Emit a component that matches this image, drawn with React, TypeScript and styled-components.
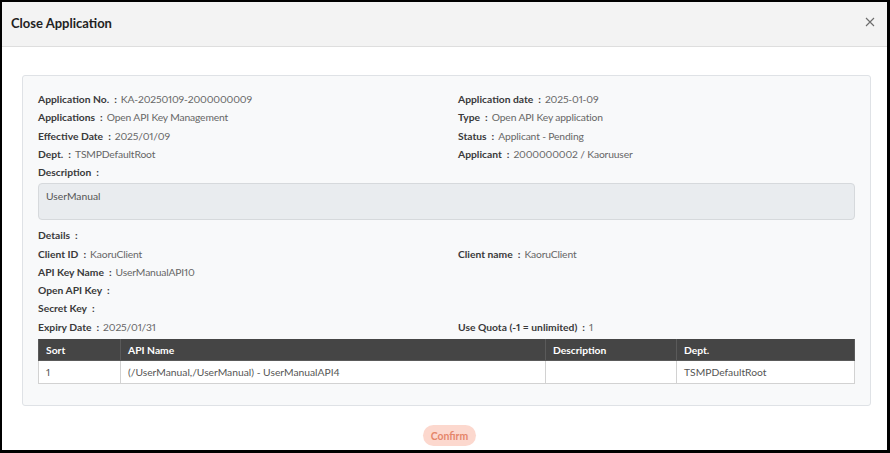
import styled, { createGlobalStyle } from "styled-components";

const GlobalStyle = createGlobalStyle`
  html, body {
    margin: 0;
    padding: 0;
    background: #000;
  }
  * {
    box-sizing: border-box;
  }
`;

const leftFields = [
  { label: "Application No.", value: "KA-20250109-2000000009" },
  { label: "Applications", value: "Open API Key Management" },
  { label: "Effective Date", value: "2025/01/09" },
  { label: "Dept.", value: "TSMPDefaultRoot" },
];

const rightFields = [
  { label: "Application date", value: "2025-01-09" },
  { label: "Type", value: "Open API Key application" },
  { label: "Status", value: "Applicant - Pending" },
  { label: "Applicant", value: "2000000002 / Kaoruuser" },
];

const detailRows = [
  [
    { label: "Client ID", value: "KaoruClient" },
    { label: "Client name", value: "KaoruClient" },
  ],
  [{ label: "API Key Name", value: "UserManualAPI10" }],
  [{ label: "Open API Key", value: "" }],
  [{ label: "Secret Key", value: "" }],
  [
    { label: "Expiry Date", value: "2025/01/31" },
    { label: "Use Quota (-1 = unlimited)", value: "1" },
  ],
];

const apis = [
  {
    sort: "1",
    name: "(/UserManual,/UserManual) - UserManualAPI4",
    description: "",
    dept: "TSMPDefaultRoot",
  },
];

function Field({ label, value }: { label: string; value: string }) {
  return (
    <Line>
      <Label>{label}</Label>
      <Colon>:</Colon>
      <Value>{value}</Value>
    </Line>
  );
}

export default function App() {
  return (
    <>
      <GlobalStyle />
      <Modal>
        <Header>
          <Title>Close Application</Title>
          <CloseButton aria-label="close">
            <svg width="10" height="10" viewBox="0 0 10 10">
              <path d="M1 1 L9 9 M9 1 L1 9" stroke="#6c6c6c" strokeWidth="1.1" />
            </svg>
          </CloseButton>
        </Header>

        <Body>
          <Card>
            <TwoCols>
              <div>
                {leftFields.map((f) => (
                  <Field key={f.label} {...f} />
                ))}
              </div>
              <div>
                {rightFields.map((f) => (
                  <Field key={f.label} {...f} />
                ))}
              </div>
            </TwoCols>

            <Line>
              <Label>Description</Label>
              <Colon>:</Colon>
            </Line>
            <DescriptionBox>UserManual</DescriptionBox>

            <Line $gap={6}>
              <Label>Details</Label>
              <Colon>:</Colon>
            </Line>
            {detailRows.map((row) => (
              <TwoCols key={row[0].label}>
                {row.map((f) => (
                  <Field key={f.label} {...f} />
                ))}
              </TwoCols>
            ))}

            <Table>
              <colgroup>
                <col style={{ width: 82 }} />
                <col style={{ width: 425 }} />
                <col style={{ width: 131 }} />
                <col />
              </colgroup>
              <thead>
                <tr>
                  <Th>Sort</Th>
                  <Th>API Name</Th>
                  <Th>Description</Th>
                  <Th>Dept.</Th>
                </tr>
              </thead>
              <tbody>
                {apis.map((a) => (
                  <tr key={a.sort}>
                    <Td>{a.sort}</Td>
                    <Td>{a.name}</Td>
                    <Td>{a.description}</Td>
                    <Td>{a.dept}</Td>
                  </tr>
                ))}
              </tbody>
            </Table>
          </Card>

          <Footer>
            <ConfirmButton>Confirm</ConfirmButton>
          </Footer>
        </Body>
      </Modal>
    </>
  );
}

const Modal = styled.div`
  width: 890px;
  height: 453px;
  overflow: hidden;
  background: #fff;
  border-style: solid;
  border-color: #000;
  border-width: 2px 3px 3px 2px;
  font-family: Lato, "Open Sans", sans-serif;
  font-variant-numeric: proportional-nums;
  color: #333;
`;

const Header = styled.div`
  display: flex;
  align-items: center;
  justify-content: space-between;
  height: 45px;
  padding: 0 12px 0 9px;
  background: #f3f3f3;
  border-bottom: 1px solid #dedede;
`;

const Title = styled.div`
  font-size: 13px;
  font-weight: 700;
  color: #222;
  padding-bottom: 3px;
`;

const CloseButton = styled.button`
  display: flex;
  border: none;
  background: none;
  padding: 0;
  margin-bottom: 4px;
  cursor: pointer;
`;

const Body = styled.div`
  padding: 28px 16px 0 20px;
`;

const Card = styled.div`
  background: #f8f9fa;
  border: 1px solid #dfe2e6;
  border-radius: 3px;
  padding: 14px 15px 21px 15px;
`;

const TwoCols = styled.div`
  display: grid;
  grid-template-columns: 420px 1fr;
`;

const Line = styled.div<{ $gap?: number }>`
  font-size: 10.3px;
  line-height: 18.25px;
  margin-top: ${(p) => p.$gap ?? 0}px;
  white-space: nowrap;
`;

const Label = styled.span`
  font-weight: 700;
  color: #3a3a3a;
`;

const Colon = styled.span`
  font-weight: 700;
  color: #3a3a3a;
  margin: 0 4px 0 5px;
`;

const Value = styled.span`
  color: #666;
  letter-spacing: -0.15px;
`;

const DescriptionBox = styled.div`
  margin-top: 2px;
  height: 37px;
  padding: 3px 7px;
  font-size: 10.3px;
  line-height: 18px;
  color: #555;
  background: #e9ecef;
  border: 1px solid #d6d9dc;
  border-radius: 4px;
`;

const Table = styled.table`
  width: 100%;
  margin-top: 3px;
  border-collapse: collapse;
  table-layout: fixed;
  font-size: 10.3px;
`;

const Th = styled.th`
  height: 22px;
  padding: 0 7px;
  text-align: left;
  font-weight: 700;
  color: #fff;
  background: #454545;
  border: 1px solid #5a5a5a;
  border-top: none;
`;

const Td = styled.td`
  height: 23px;
  padding: 0 7px;
  color: #555;
  background: #fff;
  border: 1px solid #d2d2d2;
`;

const Footer = styled.div`
  display: flex;
  justify-content: center;
  padding: 19px 0 0 6px;
`;

const ConfirmButton = styled.button`
  height: 21px;
  width: 53px;
  padding: 0;
  border: none;
  border-radius: 11px;
  background: #fcd8ce;
  color: #e5866a;
  font-family: Lato, "Open Sans", sans-serif;
  font-size: 10.4px;
  font-weight: 700;
  cursor: pointer;
`;
